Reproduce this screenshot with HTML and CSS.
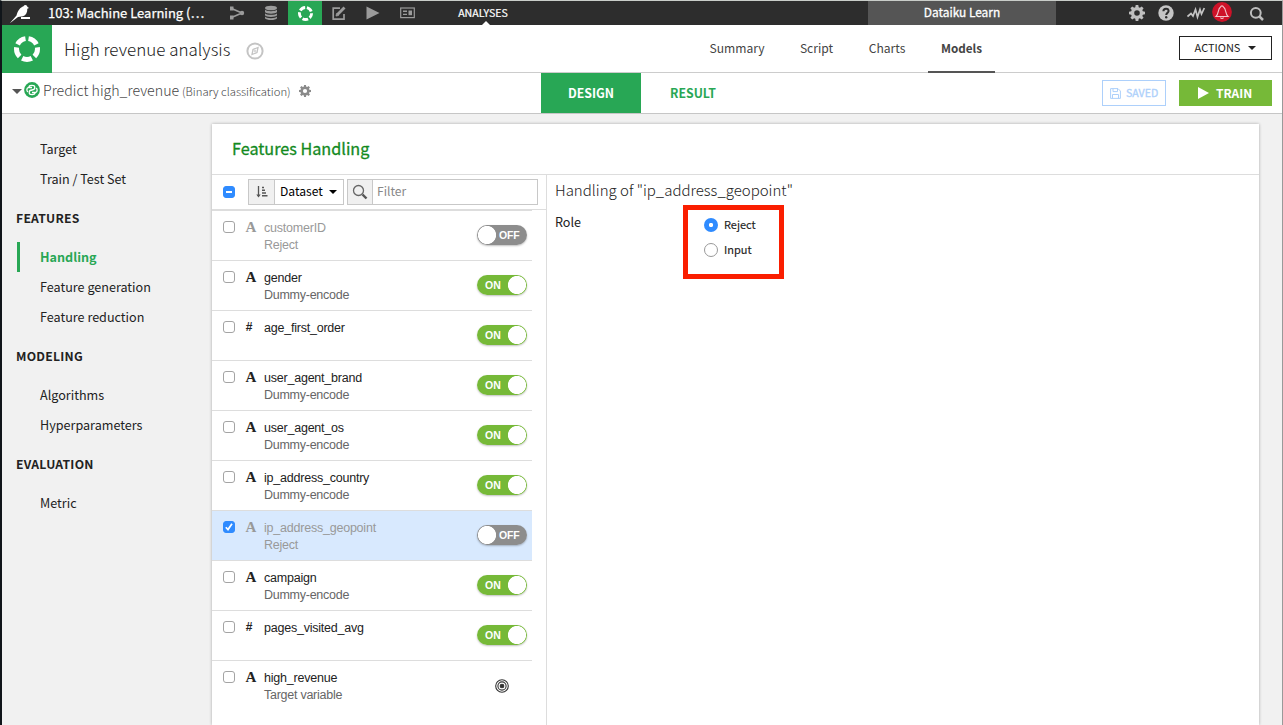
FILE: index.html
```html
<!DOCTYPE html>
<html lang="en">
<head>
<meta charset="utf-8">
<title>High revenue analysis</title>
<link rel="stylesheet" href="styles.css">
</head>
<body>
<div class="window">
  <header class="topbar">
    <svg class="logo" width="24" height="22" viewBox="0 0 24 22"><path d="M.8 21.300 7.500 13.500C8.500 9 11.500 5 14.500 4.200C15.500 2.300 18 2.500 18.500 5L20 6 18.300 6.700C18.500 10.500 17 13 14 14.300L9 15Z" fill="#fff"/><path d="M12 16H21" stroke="#fff" stroke-width="2"/></svg>
    <span class="project">103: Machine Learning (…</span>
    <nav class="topnav">
      <a><svg width="16" height="14" viewBox="0 0 16 14"><path d="M2.500 2.500 13 7M2.500 11.500 13 7" stroke="#9b9b9b" stroke-width="1.600" fill="none"/><path d="M1 .5H4.500V4.500H1ZM1 9.500H4.500V13.500H1Z" fill="#9b9b9b"/><circle cx="13" cy="7" r="2.200" fill="#9b9b9b"/></svg></a>
      <a><svg width="14" height="16" viewBox="0 0 14 16" fill="#9b9b9b"><ellipse cx="7" cy="3" rx="6" ry="2.300"/><path d="M1 4.500C2 6.700 12 6.700 13 4.500V7C12 9.300 2 9.300 1 7ZM1 8.200C2 10.400 12 10.400 13 8.200V10.200C12 12.500 2 12.500 1 10.200ZM1 11.500C2 13.700 12 13.700 13 11.500V13.300C12 15.700 2 15.700 1 13.300Z"/></svg></a>
      <a class="on"><svg width="15" height="15" viewBox="0 0 26 26"><circle class="ring" cx="13" cy="13" r="10.500" pathLength="50"/></svg></a>
      <a><svg width="16" height="16" viewBox="0 0 16 16" fill="none" stroke="#9b9b9b" stroke-width="1.700"><path d="M9 3.200H2.200V14.200H13V9"/><path d="M6.500 9.500 13.500 2.500" stroke-width="2.800"/><path d="M5 11 5.500 8.500 7.500 10.500Z" stroke-width=".8" fill="#9b9b9b"/></svg></a>
      <a><svg width="14" height="14" viewBox="0 0 14 14"><path d="M.5.5 13.500 7 .5 13.500Z" fill="#9b9b9b"/></svg></a>
      <a><svg width="15" height="12" viewBox="0 0 15 12"><rect x=".7" y="1" width="13.600" height="9.600" fill="none" stroke="#9b9b9b" stroke-width="1.200"/><path d="M3 4.200H7M3 7.400H7" stroke="#9b9b9b" stroke-width="1.400"/><path d="M8.500 3.500H12V8.200H8.500Z" fill="#9b9b9b"/></svg></a>
    </nav>
    <span class="section">ANALYSES</span>
    <span class="instance">Dataiku Learn</span>
    <div class="tools">
      <svg width="16" height="16" viewBox="0 0 16 16"><use href="#gear" fill="#bfbfbf"/></svg>
      <svg width="16" height="16" viewBox="0 0 16 16"><circle cx="8" cy="8" r="7.700" fill="#c4c4c4"/><path d="M5.400 6.200C5.400 2.700 10.600 2.900 10.600 6 10.600 7.900 8.200 7.900 8.200 10" stroke="#2d2d2d" stroke-width="2" fill="none"/><circle cx="8.200" cy="12.300" r="1.200" fill="#2d2d2d"/></svg>
      <svg width="18" height="16" viewBox="0 0 18 16"><path d="M.5 11.500 4 8.500 6 11 8.500 4.500 10.500 12 13 4.500 14.500 9 17.300 3" fill="none" stroke="#c4c4c4" stroke-width="1.700"/></svg>
      <svg class="bell" width="20" height="20" viewBox="0 0 20 20"><circle cx="10" cy="10" r="9.900" fill="#ce1228"/><path d="M4 14.500C7 12 5.500 7 8.500 5 9 3.500 11 3.500 11.500 5 14.500 7 13 12 16 14.500ZM8.500 15.500C9 16.800 11 16.800 11.500 15.500" fill="none" stroke="#f2c4ca" stroke-width="1.100"/></svg>
      <svg class="find" width="16" height="16" viewBox="0 0 16 16"><circle cx="6.800" cy="6.800" r="4.900" fill="none" stroke="#bdbdbd" stroke-width="2"/><path d="M10.500 10.500 14 14" stroke="#bdbdbd" stroke-width="2.500"/></svg>
    </div>
  </header>

  <div class="titlebar">
    <div class="brand"><svg width="28" height="28" viewBox="0 0 28 28"><circle class="ring" cx="14" cy="14" r="10.500" pathLength="50"/></svg></div>
    <h1>High revenue analysis</h1>
    <svg class="compass" width="18" height="18" viewBox="0 0 18 18" fill="none" stroke="#c4c4c4"><circle cx="9" cy="9" r="7.600" stroke-width="2"/><path d="M12 5.500 11 10.500 6 12.500 7 7.500Z" stroke-width="1.300"/><circle cx="9" cy="9" r=".9" stroke-width=".8"/></svg>
    <nav class="tabs"><a class="summary">Summary</a><a class="script">Script</a><a class="charts">Charts</a><a class="models">Models</a></nav>
    <button class="actions"><span>ACTIONS</span><i class="caret"></i></button>
  </div>

  <div class="taskbar">
    <i class="caret big"></i>
    <svg class="py" width="16" height="16" viewBox="0 0 16 16"><circle cx="8" cy="8" r="7.900" fill="#28a755"/><path d="M5.200 5V4.500C5.200 3 10.700 3 10.700 4.800V6.300C10.700 8.800 5.300 7.200 5.300 9.700V11.300C5.300 13 10.800 13 10.800 11.300V11M8 5.500H4.200C2.500 6.300 2.500 8.800 3.800 10M8 10.500H11.800C13.500 9.700 13.500 7.200 12.200 6" stroke="#fff" stroke-width="1.300" fill="none"/></svg>
    <span class="task">Predict high_revenue</span><span class="kind">(Binary classification)</span>
    <svg class="cog" width="12" height="12" viewBox="0 0 16 16"><use href="#gear" fill="#8b8b8b"/></svg>
    <nav class="modes"><a class="active">DESIGN</a><a>RESULT</a></nav>
    <span class="saved"><svg width="11" height="11" viewBox="0 0 11 11" fill="none" stroke="#add0fb"><path d="M.6.600H8L10.400 3V10.400H.6ZM3 .6V3.600H7.500V.6M2.500 10.400V6.500H8.500V10.400"/></svg><span>SAVED</span></span>
    <button class="train"><svg width="11" height="12" viewBox="0 0 11 12"><path d="M0 0 11 6 0 12Z" fill="#fff"/></svg><span>TRAIN</span></button>
  </div>

  <main class="workspace">
    <aside class="side">
      <a>Target</a><a>Train / Test Set</a>
      <h2>FEATURES</h2>
      <a class="current">Handling</a><a>Feature generation</a><a>Feature reduction</a>
      <h2>MODELING</h2>
      <a>Algorithms</a><a>Hyperparameters</a>
      <h2>EVALUATION</h2>
      <a>Metric</a>
    </aside>
    <section class="panel">
      <h3>Features Handling</h3>
      <div class="split">
        <div class="features">
          <div class="filterbar">
            <i class="box some"></i>
            <div class="sort"><b><svg width="12" height="14" viewBox="0 0 12 14"><path d="M2.500 1V11" stroke="#555" stroke-width="1.300"/><path d="M.3 9.500H4.700L2.500 12.500Z" fill="#555"/><path d="M6 2.500H8M6 5.200H9M6 7.900H10M6 10.800H11.500" stroke="#555" stroke-width="1.500"/></svg></b><span>Dataset</span><i class="caret"></i></div>
            <div class="filter"><b><svg width="16" height="16" viewBox="0 0 16 16"><circle cx="6.500" cy="6.500" r="5" fill="none" stroke="#666" stroke-width="1.300"/><path d="M10.500 10.500 14.500 14.500" stroke="#555" stroke-width="2.400"/></svg></b><span>Filter</span></div>
          </div>
          <div class="rows">
            <div class="row off"><i class="box"></i><b class="type">A</b><p>customerID<small>Reject</small></p><span class="switch off">OFF</span></div>
            <div class="row"><i class="box"></i><b class="type">A</b><p>gender<small>Dummy-encode</small></p><span class="switch">ON</span></div>
            <div class="row"><i class="box"></i><b class="type num">#</b><p>age_first_order</p><span class="switch">ON</span></div>
            <div class="row"><i class="box"></i><b class="type">A</b><p>user_agent_brand<small>Dummy-encode</small></p><span class="switch">ON</span></div>
            <div class="row"><i class="box"></i><b class="type">A</b><p>user_agent_os<small>Dummy-encode</small></p><span class="switch">ON</span></div>
            <div class="row"><i class="box"></i><b class="type">A</b><p>ip_address_country<small>Dummy-encode</small></p><span class="switch">ON</span></div>
            <div class="row off picked"><i class="box checked"><svg width="10" height="10" viewBox="0 0 10 10"><path d="M1.800 5.200 4 7.600 8 1.800" stroke="#fff" stroke-width="1.700" fill="none"/></svg></i><b class="type">A</b><p>ip_address_geopoint<small>Reject</small></p><span class="switch off">OFF</span></div>
            <div class="row"><i class="box"></i><b class="type">A</b><p>campaign<small>Dummy-encode</small></p><span class="switch">ON</span></div>
            <div class="row"><i class="box"></i><b class="type num">#</b><p>pages_visited_avg</p><span class="switch">ON</span></div>
            <div class="row"><i class="box"></i><b class="type">A</b><p>high_revenue<small>Target variable</small></p><svg class="target" width="14" height="14" viewBox="0 0 14 14" fill="none" stroke="#333" stroke-width="1.100"><circle cx="7" cy="7" r="6.300"/><circle cx="7" cy="7" r="4.100"/><circle cx="7" cy="7" r="1.800" fill="#333"/></svg></div>
          </div>
        </div>
        <div class="detail">
          <h4>Handling of "ip_address_geopoint"</h4>
          <div class="role"><label>Role</label>
            <div class="choices"><span><i class="radio sel"></i><em>Reject</em></span><span><i class="radio"></i><em>Input</em></span></div>
          </div>
        </div>
      </div>
    </section>
  </main>
</div>
<svg width="0" height="0" class="defs"><defs><path id="gear" fill-rule="evenodd" d="M6.700 0H9.300L9.700 2.200 10.900 2.700 12.700 1.400 14.600 3.300 13.300 5.100 13.800 6.300 16 6.700V9.300L13.800 9.700 13.300 10.900 14.600 12.700 12.700 14.600 10.900 13.300 9.700 13.800 9.300 16H6.700L6.300 13.800 5.100 13.300 3.300 14.600 1.400 12.700 2.700 10.900 2.200 9.700 0 9.300V6.700L2.200 6.300 2.700 5.100 1.400 3.300 3.300 1.400 5.100 2.700 6.300 2.200ZM8 5.200A2.800 2.800 0 1 0 8 10.800 2.800 2.800 0 1 0 8 5.200Z"/></defs></svg>
</body>
</html>
```
FILE: styles.css
```css
* { box-sizing: border-box; }
body { margin: 0; width: 1283px; height: 725px; overflow: hidden; background: #fff; color: #222; font: 12.6px/20px "Noto Sans CJK SC", "Open Sans", sans-serif; }
h1, h2, h3, h4, p { margin: 0; font-weight: 400; }
svg { display: block; flex: none; }
i, em { font-style: normal; }
.defs { position: absolute; }
.window { display: flex; flex-direction: column; width: 1283px; height: 725px; border-left: 2px solid #10151a; border-right: 1px solid #999; border-top: 1px solid #c9cdc9; }
.caret { width: 0; height: 0; flex: none; border: 4px solid transparent; border-top: 4px solid #222; border-bottom: 0; }
.caret.big { border-width: 5px 5px 0; border-top-color: #555; margin: 0 3px 4px 10px; }

.topbar { display: flex; align-items: center; height: 24px; flex: none; background: #2d2d2d; color: #fff; white-space: nowrap; }
.logo { margin-left: 7px; }
.project { width: 172px; margin-left: 15px; font-size: 13px; -webkit-text-stroke: .25px; }
.topnav { display: flex; }
.topnav a { display: flex; width: 34px; height: 24px; align-items: center; justify-content: center; }
.topnav a.on { background: #28a755; width: 34px; }
.ring { fill: none; stroke: #fff; stroke-width: 5; stroke-dasharray: 7.600 2.400; stroke-dashoffset: 1.300; }
.section { position: relative; width: 60px; margin-left: 29px; height: 24px; line-height: 23px; text-align: center; font-size: 10.600px; -webkit-text-stroke: .2px; }
.section::after { content: ""; position: absolute; left: 29px; bottom: 0; border: 4px solid transparent; border-bottom-color: #fff; border-top: 0; }
.instance { width: 188px; height: 24px; margin-left: 355px; line-height: 22px; background: #555; text-align: center; font-size: 11.900px; -webkit-text-stroke: .3px; }
.tools { display: flex; align-items: center; margin-left: 73px; gap: 13px; }
.tools .bell { margin: -2px 0 0 -6px; }
.tools .find { margin: 2px 0 0 4px; }

.titlebar { display: flex; align-items: center; height: 48px; flex: none; border-bottom: 1px solid #ccc; }
.brand { display: flex; align-items: center; justify-content: center; width: 50px; height: 48px; align-self: flex-start; background: #28a755; flex: none; }
h1 { width: 168px; margin-left: 12px; font-size: 17px; white-space: nowrap; font-weight: 300; }
.compass { margin-left: 14px; margin-top: 4px; }
.tabs { display: flex; margin-left: 428px; height: 48px; align-self: flex-start; color: #444; font-size: 12.100px; }
.tabs a { height: 48px; line-height: 46px; text-align: center; }
.summary { width: 90px; } .script { width: 69px; } .charts { width: 72px; }
.tabs .models { width: 67px; margin-left: 5px; font-size: 11.700px; font-weight: 700; border-bottom: 2px solid #555; }
button { font-family: inherit; cursor: pointer; }
.actions { display: flex; align-items: center; justify-content: center; gap: 8px; width: 93px; height: 24px; margin: -2px 0 0 184px; padding: 0; border: 1px solid #222; background: #fff; color: #222; font-size: 11px; line-height: 20px; }
.actions span { margin-top: -1px; }

.taskbar { display: flex; align-items: center; height: 41px; flex: none; border-bottom: 1px solid #c6c6c6; white-space: nowrap; }
.py { margin-bottom: 7px; margin-left: -1px; }
.task { width: 136px; margin: -6px 0 0 3px; font-size: 14.200px; color: #444; font-weight: 300; }
.kind { width: 110px; margin: -4px 0 0 3px; font-size: 11.300px; color: #444; font-weight: 300; }
.cog { margin: -5px 0 0 7px; }
.modes { display: flex; margin-left: 230px; align-self: stretch; }
.modes a { width: 100px; line-height: 40px; text-align: center; color: #28a755; font-weight: 700; font-size: 12.300px; }
.modes a + a { width: 104px; }
.modes .active { background: #28a755; color: #fff; }
.saved { display: flex; align-items: center; gap: 5px; width: 64px; height: 26px; margin-left: 357px; padding-left: 7px; border: 1px solid #add0fb; color: #add0fb; font-size: 10.600px; -webkit-text-stroke: .3px; }
.train { display: flex; align-items: center; gap: 7px; width: 93px; height: 26px; margin-left: 13px; padding: 0 0 0 19px; border: 0; background: #76b938; color: #fff; font-size: 12px; line-height: 20px; font-weight: 700; }

.workspace { display: flex; flex: 1; min-height: 0; background: #f1f1f1; }
.side { width: 210px; padding-top: 20px; flex: none; }
.side a { display: block; height: 30px; line-height: 30px; margin-left: 15px; padding-left: 23px; }
.side h2 { margin: 14px 0 14px 14px; height: 20px; line-height: 20px; font-size: 12.200px; font-weight: 700; letter-spacing: .25px; }
.side .current { border-left: 3px solid #28a755; padding-left: 20px; color: #28a755; font-weight: 700; }
.panel { display: flex; flex-direction: column; width: 1047px; margin-top: 10px; background: #fff; box-shadow: 0 0 3px rgba(0,0,0,.3); }
h3 { height: 51px; flex: none; padding-left: 20px; line-height: 48px; color: #138a1e; font-size: 16.200px; -webkit-text-stroke: .3px; border-bottom: 1px solid #ddd; }
.split { display: flex; flex: 1; min-height: 0; }
.features { width: 335px; border-right: 1px solid #ddd; }
.filterbar { display: flex; align-items: center; height: 35px; border-bottom: 1px solid #ddd; padding-left: 11px; }
.box { display: block; width: 12px; height: 12px; flex: none; border: 1px solid #a4a4a4; border-radius: 3px; background: #fff; }
.box.some, .box.checked { border-color: #2f8bff; background: #2f8bff; }
.box.some::after { content: ""; display: block; width: 6px; height: 2px; margin: 4px 2px; background: #fff; }
.sort, .filter { display: flex; align-items: center; height: 26px; border: 1px solid #c8c8c8; }
.sort { width: 96px; margin-left: 13px; }
.sort b, .filter b { display: flex; align-items: center; justify-content: center; flex: none; width: 26px; height: 24px; background: #f0f0f0; border-right: 1px solid #c8c8c8; }
.sort span { width: 45px; margin: -2px 4px 0 5px; font-size: 12.100px; color: #000; }
.sort .caret { border-top-color: #000; }
.filter { width: 191px; margin-left: 3px; }
.filter b { width: 25px; }
.filter span { margin: -2px 0 0 4px; color: #888; font-size: 12.100px; }
.row { display: flex; width: 320px; height: 50px; border-top: 1px solid #ddd; padding: 10px 5px 0 11px; font: 12px/17px "Liberation Sans", Arial, sans-serif; color: #222; }
.row .type { width: 14px; margin-left: 9px; font: 700 15px/14px "Liberation Serif", serif; text-align: center; margin-top: -1px; }
.row .num { font: 700 12px/14px "Liberation Sans", sans-serif; margin-left: 7px; margin-right: 2px; margin-top: -1px; }
.row p { flex: 1; margin: -1px 0 0 6px; font-size: 12.500px; letter-spacing: -.22px; }
.row small { display: block; font-size: 12.500px; letter-spacing: -.26px; color: #666; }
.row.off, .row.off small { color: #999; }
.picked { background: #d8e9fe; }
.switch { display: block; width: 50px; height: 20px; margin-top: 4px; padding-left: 8px; border-radius: 10px; color: #fff; font: 700 10.500px/20px "Liberation Sans", sans-serif; background: radial-gradient(circle at 40px 10px, #fff 8.700px, #76b938 9.400px); box-shadow: 0 1px 2px rgba(0,0,0,.25); }
.switch.off { padding-left: 22px; letter-spacing: -.2px; background: radial-gradient(circle at 10px 10px, #fff 8.700px, #8d8d8d 9.400px); }
.target { margin: 8px 18px 0 0; }
.detail { flex: 1; padding-left: 8px; }
h4 { height: 30px; line-height: 29px; font-size: 15px; font-weight: 300; color: #222; }
.role { display: flex; }
.role label { width: 128px; padding-top: 7px; }
.choices { width: 101px; height: 74px; padding: 2px 0 0 16px; border: 5px solid #fa1e00; }
.choices span { display: flex; align-items: center; height: 25px; }
.choices em { margin: -1px 0 0 6px; font-size: 11px; -webkit-text-stroke: .15px; }
.radio { width: 14px; height: 14px; border-radius: 50%; border: 1px solid #999; background: #fff; }
.radio.sel { border: 0; background: radial-gradient(circle, #fff 1.800px, #2f8bff 2.500px); }
```
